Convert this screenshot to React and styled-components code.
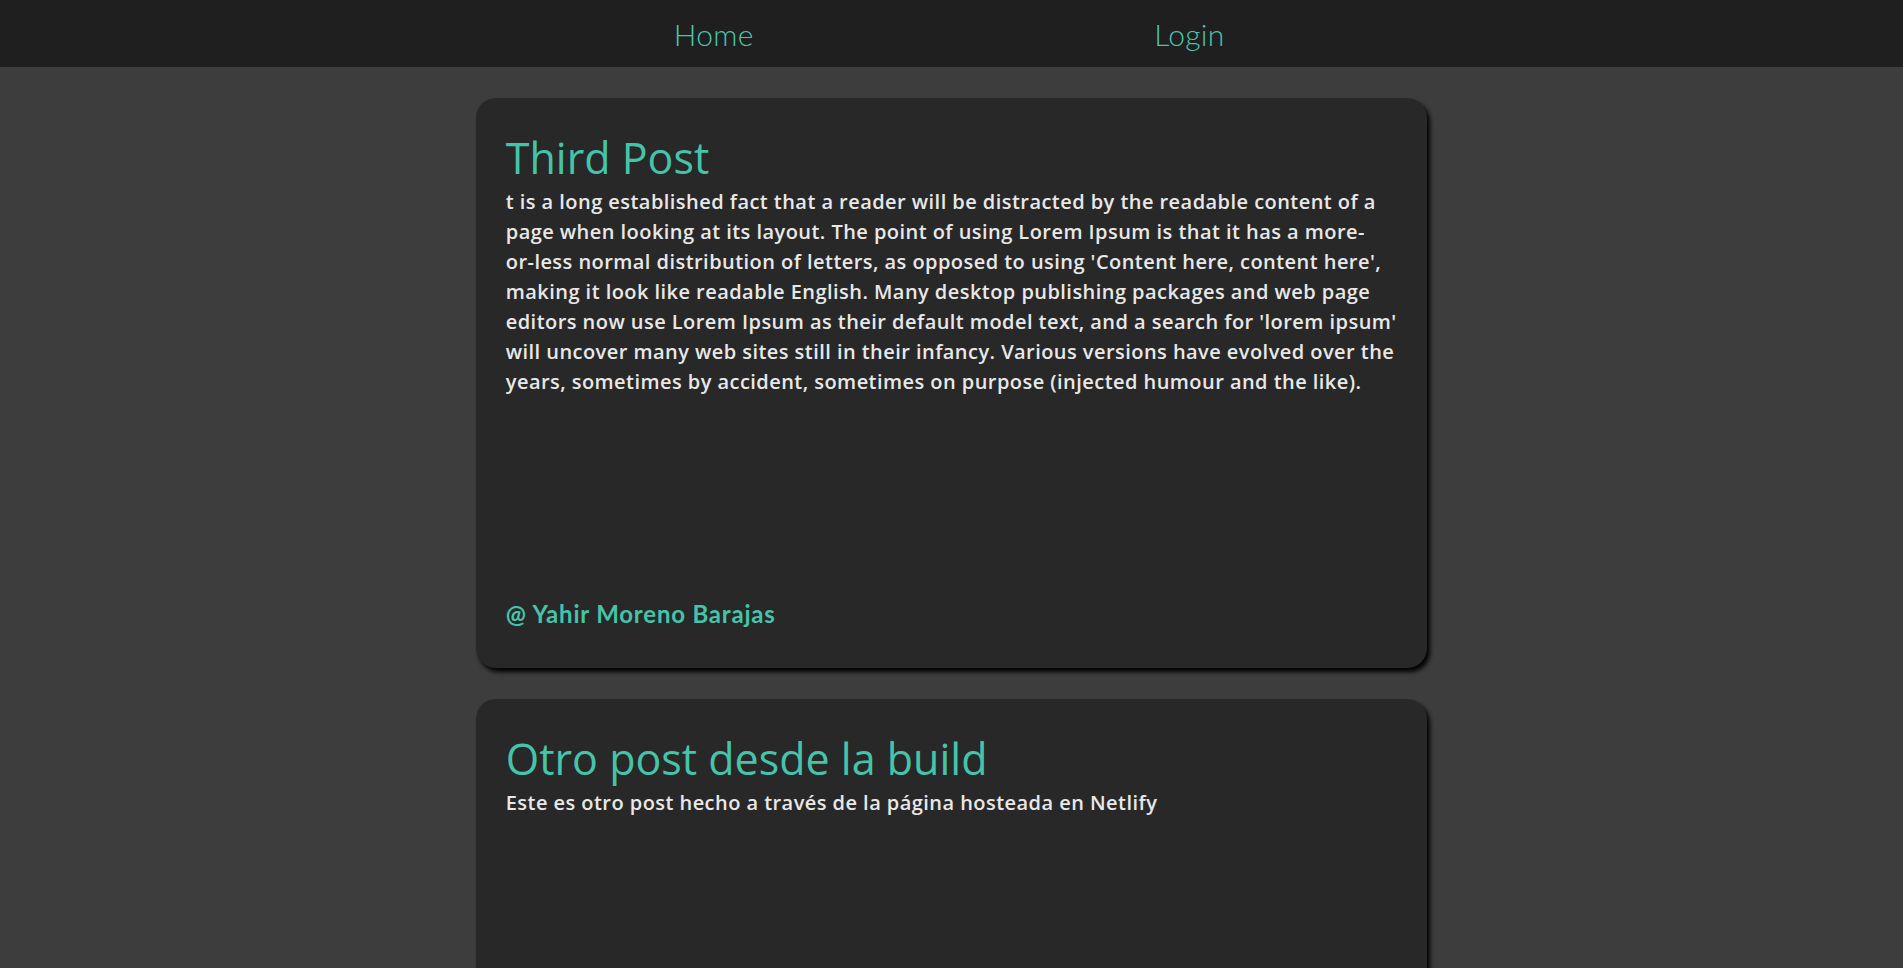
import React from "react";
import styled, { createGlobalStyle } from "styled-components";

const GlobalStyle = createGlobalStyle`
  html {
    scrollbar-width: none;
  }
  html::-webkit-scrollbar {
    display: none;
  }
  body {
    margin: 0;
    background: #3d3d3d;
    font-family: "Open Sans", "Noto Sans", sans-serif;
  }
`;

const NavBar = styled.nav`
  height: 67px;
  background: #1f1f1f;
  display: flex;
  justify-content: center;
`;

const NavList = styled.ul`
  width: 50%;
  margin: 0;
  padding: 0;
  list-style: none;
  display: flex;
  align-items: center;
`;

const NavItem = styled.li`
  flex: 1;
  text-align: center;
`;

const NavLink = styled.a`
  font-family: Lato, "Open Sans", sans-serif;
  font-weight: 300;
  font-size: 30px;
  letter-spacing: 0.3px;
  color: #4cc4ad;
  text-decoration: none;
  cursor: pointer;
`;

const Feed = styled.main`
  display: flex;
  flex-direction: column;
  align-items: center;
  gap: 31px;
  padding-top: 31px;
`;

const Card = styled.article`
  box-sizing: border-box;
  width: 50%;
  height: 570px;
  background: #282828;
  border-radius: 20px;
  box-shadow: 3px 4px 4px rgba(0, 0, 0, 0.95);
  padding: 33px 30px 40px;
  display: flex;
  flex-direction: column;
`;

const Title = styled.h2`
  margin: 1px 0 3px;
  font-family: "Open Sans", "Noto Sans", sans-serif;
  font-weight: 400;
  font-size: 43px;
  line-height: 1.2;
  color: #45c4aa;
`;

const Body = styled.p`
  margin: 0;
  font-family: "Open Sans", "Noto Sans", sans-serif;
  font-weight: 600;
  font-size: 20px;
  letter-spacing: 0.45px;
  line-height: 30px;
  color: #e8e8e8;
`;

const NoWrap = styled.span`
  white-space: nowrap;
`;

const Author = styled.div`
  margin-top: auto;
  font-family: Lato, "Open Sans", sans-serif;
  font-weight: 700;
  font-size: 24px;
  letter-spacing: 0.8px;
  color: #45c4aa;
`;

const posts = [
  {
    title: "Third Post",
    body: (
      <>
        t is a long established fact that a reader will be distracted by the
        readable content of a page when looking at its layout. The point of
        using Lorem Ipsum is that it has a more-<NoWrap>or-less</NoWrap> normal
        distribution of letters, as opposed to using 'Content here, content
        here', making it look like readable English. Many desktop publishing
        packages and web page editors now use Lorem Ipsum as their default model
        text, and a search for 'lorem ipsum' will uncover many web sites still
        in their infancy. Various versions have evolved over the years,
        sometimes by accident, sometimes on purpose (injected humour and the
        like).
      </>
    ),
    author: "@ Yahir Moreno Barajas",
  },
  {
    title: "Otro post desde la build",
    body: "Este es otro post hecho a través de la página hosteada en Netlify",
    author: "@ Yahir Moreno Barajas",
  },
];

export default function App() {
  return (
    <>
      <GlobalStyle />
      <NavBar>
        <NavList>
          <NavItem>
            <NavLink>Home</NavLink>
          </NavItem>
          <NavItem>
            <NavLink>Login</NavLink>
          </NavItem>
        </NavList>
      </NavBar>
      <Feed>
        {posts.map((p) => (
          <Card key={p.title}>
            <Title>{p.title}</Title>
            <Body>{p.body}</Body>
            <Author>{p.author}</Author>
          </Card>
        ))}
      </Feed>
    </>
  );
}
